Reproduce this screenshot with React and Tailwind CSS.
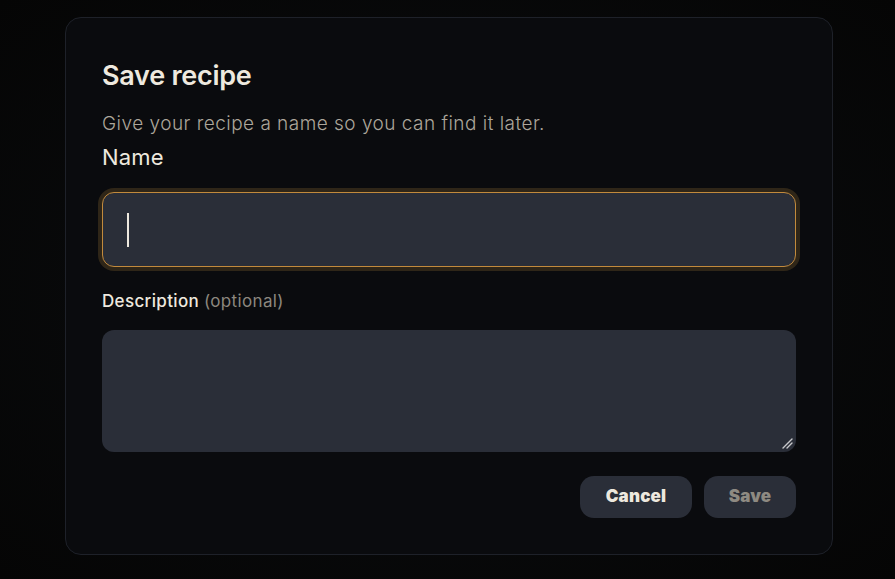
import React from 'react';

export default function App() {
  return (
    <div
      className="w-[895px] h-[579px] overflow-hidden bg-[#060607] bg-[radial-gradient(ellipse_at_center,#121316_0%,#08090a_55%,#050505_100%)] pt-[17px] pl-[65px]"
      style={{ fontFamily: 'Inter, "Noto Sans", sans-serif' }}
    >
      {/* Dialog */}
      <div className="w-[768px] h-[538px] rounded-2xl border border-[#1e2129] bg-[#0a0b0e] px-9 pt-[42px]">
        <h2 className="text-[27px] leading-8 font-semibold tracking-[-0.01em] text-[#eee9df]">
          Save recipe
        </h2>
        <p className="mt-[18px] text-[19px] leading-7 font-light tracking-[0.025em] text-[#aca69b]">
          Give your recipe a name so you can find it later.
        </p>

        <label className="block mt-[5px] text-[22px] leading-7 font-normal tracking-[0.01em] text-[#eee9df]">
          Name
        </label>
        <div className="relative mt-[21px]">
          <input
            type="text"
            className="block w-full h-[75px] rounded-xl border border-[#c28a3c] bg-[#2a2e38] px-6 text-[30px] text-[#ede8de] caret-transparent outline-none shadow-[0_0_0_4px_#2f2618]"
          />
          {/* caret */}
          <span className="absolute left-[25px] top-[21px] h-[34px] w-[2px] bg-[#ede8de]" />
        </div>

        <label className="block mt-[22px] text-[17px] leading-6 font-medium tracking-[0.02em] text-[#eee9df]">
          Description <span className="font-normal text-[#8c877e]">(optional)</span>
        </label>
        <div className="relative mt-[17px]">
          <textarea className="block w-full h-[122px] resize-none rounded-xl bg-[#2a2e38] px-6 py-4 text-[18px] text-[#ede8de] outline-none" />
          {/* resize grip */}
          <svg className="absolute right-[3px] bottom-[3px] w-[11px] h-[11px]" viewBox="0 0 11 11">
            <path d="M1 10 L10 1 M5 10 L10 5" stroke="#c9c9cc" strokeWidth="1.4" strokeLinecap="round" />
          </svg>
        </div>

        <div className="mt-6 flex justify-end gap-3">
          <button className="h-[42px] w-[112px] rounded-[14px] bg-[#2a2e38] text-[17px] font-black tracking-[0.01em] text-[#ede8de]">
            Cancel
          </button>
          <button
            disabled
            className="h-[42px] w-[92px] rounded-[14px] bg-[#2a2e38] text-[17px] font-black tracking-[0.01em] text-[#8e8a82]"
          >
            Save
          </button>
        </div>
      </div>
    </div>
  );
}
